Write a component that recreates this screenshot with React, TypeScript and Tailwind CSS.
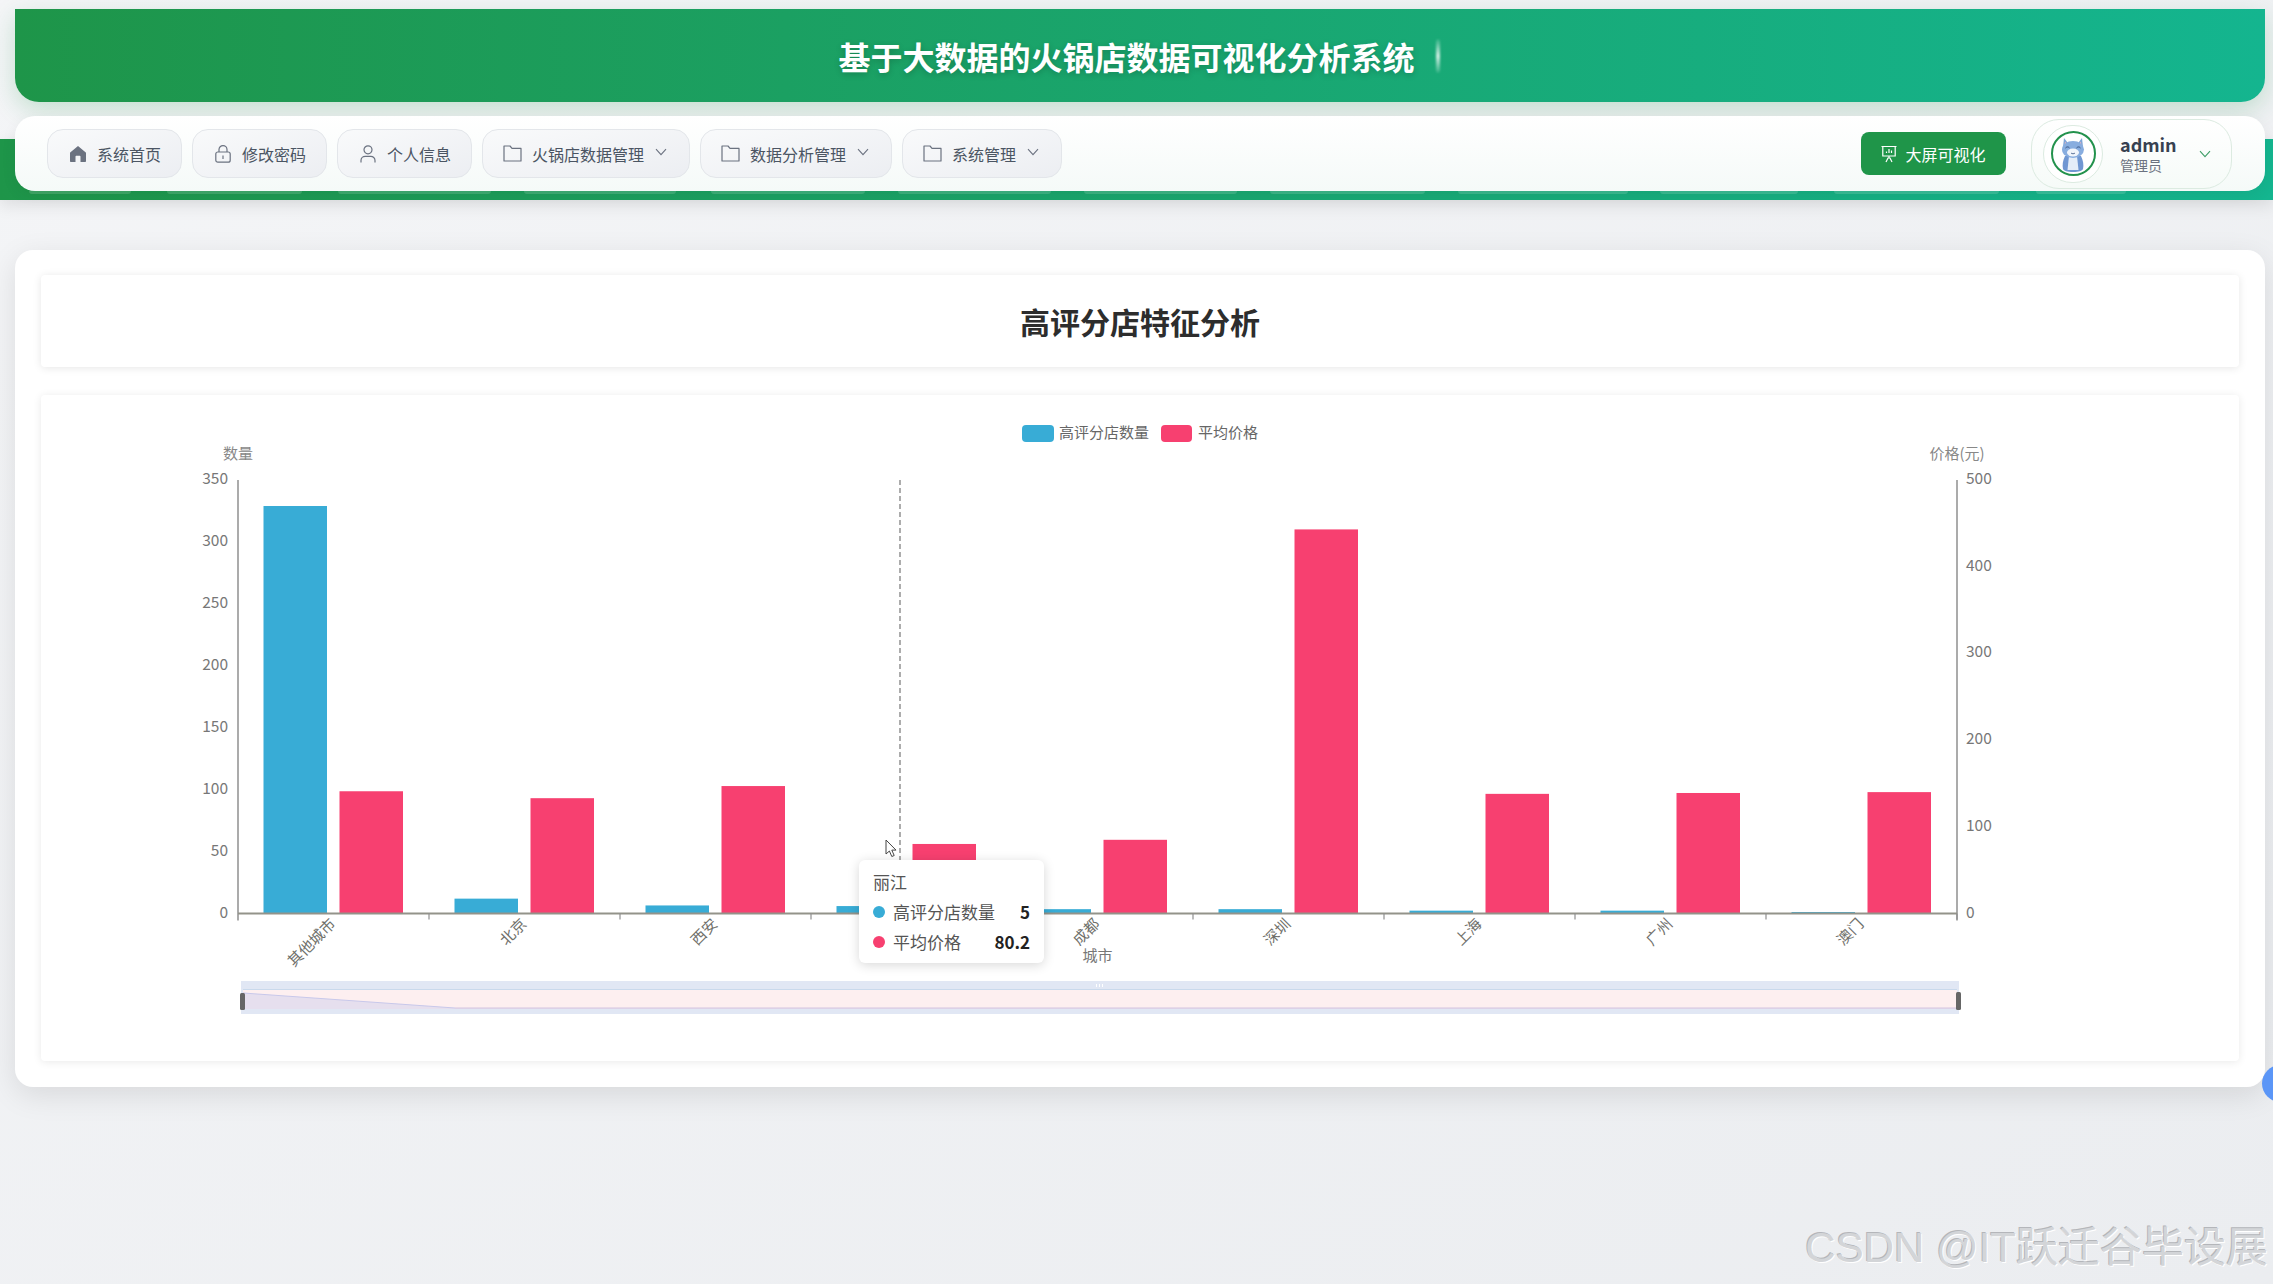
import type { ReactNode } from "react";

const CITIES = ["其他城市", "北京", "西安", "丽江", "成都", "深圳", "上海", "广州", "澳门"];
const COUNTS = [329, 12, 6.5, 6, 3.5, 3.5, 2.3, 2.3, 1.2];
const PRICES = [141, 133, 147, 80.2, 85, 443, 138, 139, 140];

const AXIS_TOP = 480;
const AXIS_BOTTOM = 913.5;
const AXIS_LEFT = 238;
const AXIS_RIGHT = 1957;
const STEP = (AXIS_RIGHT - AXIS_LEFT) / 9;
const PLOT_H = AXIS_BOTTOM - AXIS_TOP;

// little slivers of the blurred menu that show under the white nav bar
const SLIVERS = [
  [29, 102], [167, 135], [338, 153], [524, 152], [711, 154], [898, 153],
  [1084, 153], [1270, 155], [1458, 170], [1660, 138], [1834, 165], [2036, 90],
];

const CN = "font-['Noto_Sans_CJK_SC','Noto_Sans',sans-serif]";

function HomeIcon() {
  return (
    <svg width="18" height="18" viewBox="0 0 18 18" className="shrink-0">
      <path
        d="M9 1 1.2 7.6c-.2.2-.2.4-.2.6V16c0 .6.4 1 1 1h4.5v-5.2c0-.6.4-1 1-1h3c.6 0 1 .4 1 1V17H16c.6 0 1-.4 1-1V8.2c0-.2 0-.4-.2-.6L9 1Z"
        fill="#6b7280"
      />
    </svg>
  );
}

function LockIcon() {
  return (
    <svg width="16" height="18" viewBox="0 0 16 18" fill="none" stroke="#6b7280" strokeWidth="1.2" className="shrink-0">
      <rect x="0.8" y="7" width="14.4" height="10.2" rx="2" />
      <path d="M4 7V4.6a4 4 0 0 1 8 0V7" />
      <path d="M8 10.5v3.4" />
    </svg>
  );
}

function UserIcon() {
  return (
    <svg width="16" height="18" viewBox="0 0 16 18" fill="none" stroke="#6b7280" strokeWidth="1.2" className="shrink-0">
      <circle cx="8" cy="4.8" r="4" />
      <path d="M1 17.4v-2c0-2.4 2-4 4.2-4h5.6c2.2 0 4.2 1.6 4.2 4v2" />
    </svg>
  );
}

function FolderIcon() {
  return (
    <svg width="19" height="17" viewBox="0 0 19 17" fill="none" stroke="#6b7280" strokeWidth="1.2" className="shrink-0">
      <path d="M1 1h6l2 2.4h9V16H1V1Z" strokeLinejoin="round" />
    </svg>
  );
}

function Chevron({ color = "#6b7280" }: { color?: string }) {
  return (
    <svg width="12" height="8" viewBox="0 0 12 8" fill="none" stroke={color} strokeWidth="1.1" className="shrink-0">
      <path d="M1 1.2 6 6.6l5-5.4" />
    </svg>
  );
}

function NavPill({
  icon,
  label,
  width,
  arrow,
}: {
  icon: ReactNode;
  label: string;
  width: string;
  arrow?: boolean;
}) {
  return (
    <div
      className={`${width} flex h-[49px] items-center gap-[10px] rounded-2xl border border-[#e3e6ea] bg-gradient-to-br from-[#f9fafb] to-[#eceef2] pl-[20px] text-base text-[#4b5563]`}
    >
      <span className="flex w-[19px] justify-center">{icon}</span>
      <span>{label}</span>
      {arrow ? (
        <span className="ml-px -translate-y-0.5">
          <Chevron />
        </span>
      ) : null}
    </div>
  );
}

function Avatar() {
  return (
    <div className="flex h-[58px] w-[60px] shrink-0 items-center justify-center rounded-full border border-[#dcebe1] bg-white">
      <div className="flex h-[45px] w-[45px] items-center justify-center overflow-hidden rounded-full border-2 border-[#23924d] bg-white">
        <svg width="34" height="40" viewBox="0 0 34 38">
          <path d="M8 3 7 12h8L8 3Z" fill="#7ea5d8" />
          <path d="M26 3 27 12h-8l7-9Z" fill="#7ea5d8" />
          <path d="M9 6.5 8.6 11h4L9 6.5Z" fill="#e8b4c0" />
          <path d="M25 6.5 25.4 11h-4l3.6-4.5Z" fill="#e8b4c0" />
          <path d="M9 21c-2 4-3 9-2 13 1 2 4 3 10 3s9-1 10-3c1-4 0-9-2-13H9Z" fill="#7097d2" />
          <path d="M13 21h8l1.5 14h-11L13 21Z" fill="#e4edf8" />
          <ellipse cx="17" cy="14.5" rx="11" ry="8.5" fill="#88addf" />
          <ellipse cx="17" cy="17.5" rx="6" ry="4" fill="#f1f5fb" />
          <path d="M9.5 13c1.2-1.4 3-1.4 4 0M20.5 13c1.2-1.4 3-1.4 4 0" fill="none" stroke="#34507f" strokeWidth="1" />
          <path d="M15 18c1 1 3 1 4 0" fill="none" stroke="#34507f" strokeWidth="0.8" />
        </svg>
      </div>
    </div>
  );
}

function Chart() {
  const ticksLeft = [0, 50, 100, 150, 200, 250, 300, 350];
  const ticksRight = [0, 100, 200, 300, 400, 500];
  const blue = "#38acd6";
  const pink = "#f74070";

  return (
    <svg
      width="2198"
      height="666"
      viewBox="41 395 2198 666"
      className="block"
      fontFamily="'Noto Sans CJK SC', 'Noto Sans', sans-serif"
      fontSize="15"
    >
      {/* legend */}
      <rect x="1022" y="425" width="32" height="17" rx="4" fill={blue} />
      <text x="1059" y="438" fill="#666">高评分店数量</text>
      <rect x="1161" y="425" width="31" height="17" rx="4" fill={pink} />
      <text x="1198" y="438" fill="#666">平均价格</text>

      {/* axis names */}
      <text x="238" y="459" textAnchor="middle" fill="#888">数量</text>
      <text x="1957" y="459" textAnchor="middle" fill="#888">价格(元)</text>
      <text x="1097.5" y="961" textAnchor="middle" fill="#777">城市</text>

      {/* tooltip pointer line */}
      <line x1="900" y1={AXIS_TOP} x2="900" y2={AXIS_BOTTOM} stroke="#8a8a8a" strokeWidth="1.4" strokeDasharray="5 3" />

      {/* bars */}
      {CITIES.map((c, i) => {
        const bh = (COUNTS[i] / 350) * PLOT_H;
        const ph = (PRICES[i] / 500) * PLOT_H;
        return (
          <g key={c}>
            <rect x={263.5 + i * STEP} y={AXIS_BOTTOM - bh} width="63.5" height={bh} fill={blue} />
            <rect x={339.5 + i * STEP} y={AXIS_BOTTOM - ph} width="63.5" height={ph} fill={pink} />
          </g>
        );
      })}

      {/* axes */}
      <line x1={AXIS_LEFT} y1={AXIS_TOP} x2={AXIS_LEFT} y2={AXIS_BOTTOM + 7} stroke="#8f8f8f" strokeWidth="1.5" />
      <line x1={AXIS_RIGHT} y1={AXIS_TOP} x2={AXIS_RIGHT} y2={AXIS_BOTTOM + 7} stroke="#8f8f8f" strokeWidth="1.5" />
      <line x1={AXIS_LEFT} y1={AXIS_BOTTOM} x2={AXIS_RIGHT} y2={AXIS_BOTTOM} stroke="#93938a" strokeWidth="2" />
      {CITIES.map((c, i) => (
        <line
          key={c}
          x1={AXIS_LEFT + (i + 1) * STEP}
          y1={AXIS_BOTTOM}
          x2={AXIS_LEFT + (i + 1) * STEP}
          y2={AXIS_BOTTOM + 6}
          stroke="#8f8f8f"
          strokeWidth="1.2"
        />
      ))}

      {ticksLeft.map((t) => (
        <text key={t} x="228" y={AXIS_BOTTOM - (t / 350) * PLOT_H + 4} textAnchor="end" fontSize="15.5" fill="#777">
          {t}
        </text>
      ))}
      {ticksRight.map((t) => (
        <text key={t} x="1966" y={AXIS_BOTTOM - (t / 500) * PLOT_H + 4} fontSize="15.5" fill="#777">
          {t}
        </text>
      ))}

      {CITIES.map((c, i) => {
        const x = AXIS_LEFT + (i + 0.5) * STEP + 3;
        const y = 925;
        return (
          <text key={c} x={x} y={y} textAnchor="end" fill="#6f6f6a" transform={`rotate(-45 ${x} ${y})`}>
            {c}
          </text>
        );
      })}

      {/* data zoom */}
      <rect x="241" y="981" width="1718" height="33" fill="#e1e7f4" />
      <rect x="243" y="990" width="1714" height="19" fill="#fdeff0" />
      <line x1="243" y1="989.5" x2="1957" y2="989.5" stroke="#c9d9ec" />
      <path d="M243 993 455 1008H1957V1009H243Z" fill="#e6dfee" />
      <line x1="455" y1="1008" x2="1957" y2="1008" stroke="#d2c4e0" />
      <line x1="243" y1="993" x2="455" y2="1008" stroke="#c8c8ea" />
      <rect x="240" y="993" width="5" height="17" rx="1.5" fill="#666" />
      <rect x="1956" y="992" width="5" height="18" rx="1.5" fill="#666" />
      <rect x="1096" y="984" width="1" height="3" fill="#fff" />
      <rect x="1099" y="984" width="1" height="3" fill="#fff" />
      <rect x="1102" y="984" width="1" height="3" fill="#fff" />
    </svg>
  );
}

function ChartTooltip() {
  return (
    <div className="absolute left-[818px] top-[465px] h-[103px] w-[185px] rounded-md bg-white px-[14px] pt-[9px] text-[17px] leading-[30px] text-[#555] shadow-[0_2px_12px_rgba(0,0,0,0.16)]">
      <div className="leading-[26px]">丽江</div>
      <div className="mt-[2px] flex items-center">
        <span className="mr-[8px] h-3 w-3 rounded-full bg-[#38acd6]" />
        <span>高评分店数量</span>
        <span className="ml-auto font-bold text-[#222]">5</span>
      </div>
      <div className="flex items-center">
        <span className="mr-[8px] h-3 w-3 rounded-full bg-[#f74070]" />
        <span>平均价格</span>
        <span className="ml-auto font-bold text-[#222]">80.2</span>
      </div>
      {/* the mouse pointer sits above the tooltip */}
      <svg width="12" height="19" viewBox="0 0 12 19" className="absolute left-[26px] top-[-21px]">
        <path d="M1 1v14l3.4-3 2.4 5.5 2.4-1-2.4-5.4H11L1 1Z" fill="#fff" stroke="#444" strokeWidth="1" />
      </svg>
    </div>
  );
}

export default function App() {
  return (
    <div
      className={`${CN} relative h-[1284px] overflow-hidden bg-gradient-to-br from-[#f4f5f7] to-[#ebedf0] pt-[9px]`}
    >
      {/* title bar */}
      <header className="ml-[15px] mr-[8px] flex h-[93px] items-center justify-center rounded-b-3xl bg-gradient-to-r from-[#1e9549] to-[#14b58f] shadow-[0_8px_24px_rgba(30,149,73,0.22)]">
        <h1 className="ml-[-2px] text-[32px] font-bold text-white [text-shadow:0_2px_6px_rgba(0,0,0,0.2)]">
          基于大数据的火锅店数据可视化分析系统
        </h1>
        <span className="ml-[21px] h-[34px] w-[4px] rounded bg-gradient-to-b from-white/10 via-white/80 to-white/10 blur-[1px]" />
      </header>

      {/* green band with the nav bar on it */}
      <div className="relative mt-[37px] flex h-[61px] items-start bg-gradient-to-r from-[#1e9549] to-[#14b58f] shadow-[0_5px_16px_rgba(0,0,0,0.1)]">
        {SLIVERS.map(([x, w]) => (
          <span
            key={x}
            className="absolute top-[52px] h-[3px] rounded-b bg-white/15"
            style={{ left: x, width: w }}
          />
        ))}
        <nav className="relative ml-[15px] mr-[8px] -mt-[23px] flex h-[75px] flex-1 items-center rounded-[20px] bg-gradient-to-b from-white to-[#f5faf8] pl-[32px] pr-[33px] shadow-[0_4px_16px_rgba(0,0,0,0.06)]">
          <div className="flex gap-[10px]">
            <NavPill icon={<HomeIcon />} label="系统首页" width="w-[135px]" />
            <NavPill icon={<LockIcon />} label="修改密码" width="w-[135px]" />
            <NavPill icon={<UserIcon />} label="个人信息" width="w-[135px]" />
            <NavPill icon={<FolderIcon />} label="火锅店数据管理" width="w-[208px]" arrow />
            <NavPill icon={<FolderIcon />} label="数据分析管理" width="w-[192px]" arrow />
            <NavPill icon={<FolderIcon />} label="系统管理" width="w-[160px]" arrow />
          </div>
          <button
            type="button"
            className="ml-auto flex h-[43px] w-[145px] items-center justify-center gap-[8px] rounded-lg bg-[#1f9549] text-base text-white"
          >
            <svg width="16" height="18" viewBox="0 0 16 18" fill="none" stroke="#fff" strokeWidth="1.2">
              <path d="M0.5 1.5h15M1.8 1.5V11h12.4V1.5M8 11v2M5 17l2-4h2l2 4" />
              <path d="M5.5 8V6.5M8 8V4M10.5 8V5.5" />
            </svg>
            大屏可视化
          </button>
          <div className="ml-[25px] flex h-[70px] w-[201px] items-center rounded-[28px] border border-[#dcebe1] bg-gradient-to-b from-white to-[#f6fbf8] pl-[11px]">
            <Avatar />
            <div className="ml-[17px] flex flex-col">
              <span className="text-lg font-semibold leading-[24px] text-[#374151]">admin</span>
              <span className="text-sm leading-[19px] text-[#6b7280]">管理员</span>
            </div>
            <span className="ml-[22px]">
              <Chevron color="#3f9e68" />
            </span>
          </div>
        </nav>
      </div>

      {/* page content */}
      <main className="ml-[15px] mr-[8px] mt-[50px] flex h-[837px] flex-col gap-[28px] rounded-[18px] bg-white px-[26px] pb-[26px] pt-[25px] shadow-[0_8px_30px_rgba(0,0,0,0.1)]">
        <div className="flex h-[92px] items-center justify-center rounded bg-white shadow-[0_1px_8px_rgba(0,0,0,0.1)]">
          <h2 className="text-[30px] font-bold text-[#2d2d2d]">高评分店特征分析</h2>
        </div>
        <div className="relative h-[666px] rounded bg-white shadow-[0_1px_8px_rgba(0,0,0,0.09)]">
          <Chart />
          <ChartTooltip />
        </div>
      </main>

      {/* floating helper bubble, half off screen */}
      <span className="absolute left-[2262px] top-[1065px] h-[37px] w-[37px] rounded-full bg-[#5b96f7]" />

      {/* video watermark */}
      <div className="absolute right-[5px] top-[1222px] whitespace-nowrap font-['Liberation_Sans','Noto_Sans_CJK_SC',sans-serif] text-[42px] leading-[52px] text-[#d3d5d8] [text-shadow:1px_1px_0_#fff,-1px_-1px_0_#b4b6ba]">
        CSDN @IT跃迁谷毕设展
      </div>
    </div>
  );
}
